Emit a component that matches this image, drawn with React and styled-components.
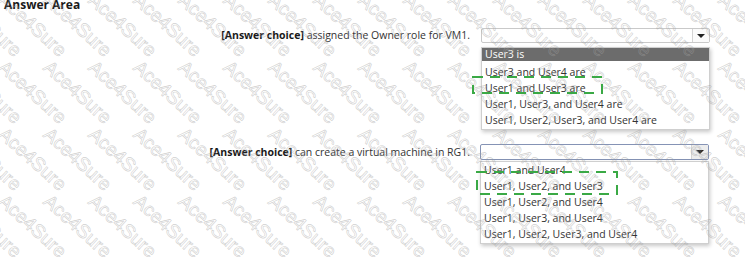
import React from "react";
import styled, { createGlobalStyle } from "styled-components";

const Global = createGlobalStyle`
  html, body { margin: 0; padding: 0; background: #fff; }
  body { font-family: "Open Sans", "Noto Sans", "Liberation Sans", sans-serif; color: #222; }
`;

const Page = styled.div`
  position: relative;
  width: 745px;
  height: 257px;
  overflow: hidden;
  background: #fff;
`;

const Title = styled.div`
  margin: -2px 0 0 4px;
  font-size: 12px;
  font-weight: 700;
  line-height: 14px;
  color: #1a1a1a;
`;

const Question = styled.div`
  display: grid;
  grid-template-columns: 475px 230px;
  align-items: start;
  margin-top: ${(p) => p.$top}px;
`;

const Label = styled.div`
  text-align: right;
  padding-right: 5px;
  font-size: 10.5px;
  line-height: ${(p) => p.$lh}px;
  color: #333;
  white-space: nowrap;
  b { font-weight: 700; color: #1a1a1a; }
`;

const Field = styled.div`
  display: flex;
  flex-direction: column;
  padding-left: ${(p) => p.$indent}px;
  width: 229px;
`;

const Select = styled.div`
  display: flex;
  height: ${(p) => p.$h}px;
  box-sizing: border-box;
  border: 1px solid ${(p) => (p.$focus ? "#8593b5" : "#c9c9c9")};
  border-radius: 2px;
  background: #fff;
`;

const SelectValue = styled.div`
  flex: 1;
`;

const ArrowBox = styled.div`
  width: 16px;
  display: flex;
  align-items: center;
  justify-content: center;
  border-left: 1px solid #d4d4d4;
  background: ${(p) => (p.$focus ? "#ededed" : "#fbfbfb")};
`;

const Triangle = styled.span`
  width: 0;
  height: 0;
  border-left: 4px solid transparent;
  border-right: 4px solid transparent;
  border-top: 4px solid #222;
`;

const List = styled.ul`
  list-style: none;
  margin: ${(p) => p.$gap}px 0 0 0;
  padding: 0 0 1px 0;
  width: 229px;
  box-sizing: border-box;
  border: 1px solid #cfcfcf;
  background: #fff;
  box-shadow: 1px 2px 4px rgba(0, 0, 0, 0.22);
`;

const Option = styled.li`
  height: ${(p) => (p.$active ? 13 : 16)}px;
  line-height: ${(p) => (p.$active ? 13 : 16)}px;
  margin-bottom: ${(p) => (p.$active ? 3 : 0)}px;
  padding-left: 3px;
  font-size: 10.5px;
  white-space: nowrap;
  color: ${(p) => (p.$active ? "#fff" : "#333")};
  background: ${(p) => (p.$active ? "#6c6c6c" : "transparent")};
`;

const Overlay = styled.div`
  position: absolute;
  inset: 0;
  pointer-events: none;
  overflow: hidden;
`;

const Mark = styled.span`
  position: absolute;
  font-family: "Liberation Sans", Arial, sans-serif;
  font-size: 19px;
  line-height: 1;
  color: transparent;
  -webkit-text-stroke: 0.6px rgba(160, 160, 160, 0.5);
  transform: rotate(42deg);
  transform-origin: 0 0;
  white-space: nowrap;
`;

const Annot = styled.svg`
  position: absolute;
  left: 0;
  top: 0;
  pointer-events: none;
`;

const q1 = [
  "User3 is",
  "User3 and User4 are",
  "User1 and User3 are",
  "User1, User3, and User4 are",
  "User1, User2, User3, and User4 are",
];
const q2 = [
  "User1 and User4",
  "User1, User2, and User3",
  "User1, User2, and User4",
  "User1, User3, and User4",
  "User1, User2, User3, and User4",
];

function Watermark() {
  const marks = [];
  for (let r = 0; r < 5; r++) {
    for (let c = -2; c < 18; c++) {
      marks.push(
        <Mark key={`${r}-${c}`} style={{ left: c * 45 + 8, top: r * 67 - 10 }}>
          Ace4Sure
        </Mark>
      );
    }
  }
  return <Overlay>{marks}</Overlay>;
}

export default function App() {
  return (
    <Page>
      <Global />
      <Title>Answer Area</Title>
      <Question $top={16}>
        <Label $lh={15}>
          <b>[Answer choice]</b> assigned the Owner role for VM1.
        </Label>
        <Field $indent={6}>
          <Select $h={15}>
            <SelectValue />
            <ArrowBox>
              <Triangle />
            </ArrowBox>
          </Select>
          <List $gap={4}>
            {q1.map((t, i) => (
              <Option key={t} $active={i === 0}>
                {t}
              </Option>
            ))}
          </List>
        </Field>
      </Question>
      <Question $top={14}>
        <Label $lh={16}>
          <b>[Answer choice]</b> can create a virtual machine in RG1.
        </Label>
        <Field $indent={5}>
          <Select $h={16} $focus>
            <SelectValue />
            <ArrowBox $focus>
              <Triangle />
            </ArrowBox>
          </Select>
          <List $gap={1}>
            {q2.map((t) => (
              <Option key={t}>{t}</Option>
            ))}
          </List>
        </Field>
      </Question>
      <Watermark />
      <Annot width="745" height="257">
        <rect x="473" y="77" width="129" height="16" fill="none" stroke="#3aa945" strokeWidth="2" strokeDasharray="10 7" />
        <rect x="477" y="172" width="140" height="22" fill="none" stroke="#3aa945" strokeWidth="2" strokeDasharray="10 7" />
      </Annot>
    </Page>
  );
}
